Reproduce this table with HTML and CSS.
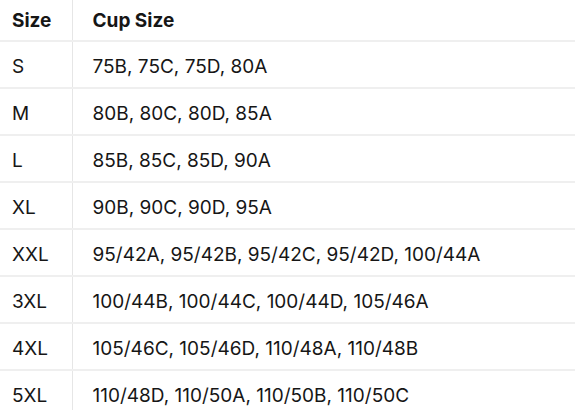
FILE: index.html
```html
<!DOCTYPE html>
<html>
<head>
<meta charset="utf-8">
<link rel="stylesheet" href="styles.css">
</head>
<body>
<table class="size-table">
  <thead>
    <tr><th class="col-size">Size</th><th class="col-cup">Cup Size</th></tr>
  </thead>
  <tbody>
    <tr><td class="col-size">S</td><td class="col-cup">75B, 75C, 75D, 80A</td></tr>
    <tr><td class="col-size">M</td><td class="col-cup">80B, 80C, 80D, 85A</td></tr>
    <tr><td class="col-size">L</td><td class="col-cup">85B, 85C, 85D, 90A</td></tr>
    <tr><td class="col-size">XL</td><td class="col-cup">90B, 90C, 90D, 95A</td></tr>
    <tr><td class="col-size">XXL</td><td class="col-cup">95/42A, 95/42B, 95/42C, 95/42D, 100/44A</td></tr>
    <tr><td class="col-size">3XL</td><td class="col-cup">100/44B, 100/44C, 100/44D, 105/46A</td></tr>
    <tr><td class="col-size">4XL</td><td class="col-cup">105/46C, 105/46D, 110/48A, 110/48B</td></tr>
    <tr><td class="col-size">5XL</td><td class="col-cup">110/48D, 110/50A, 110/50B, 110/50C</td></tr>
  </tbody>
</table>
</body>
</html>
```
FILE: styles.css
```css
html, body {
  margin: 0;
  padding: 0;
  background: #ffffff;
}
body {
  font-family: Inter, "Liberation Sans", sans-serif;
  color: #161616;
  overflow: hidden;
}
.size-table {
  width: 575px;
  border-collapse: collapse;
  font-size: 19px;
}
.size-table th,
.size-table td {
  text-align: left;
  padding: 0;
  border-bottom: 2px solid #efefef;
  vertical-align: middle;
  box-sizing: border-box;
}
.size-table th {
  height: 41px;
  font-weight: 700;
}
.size-table td {
  height: 47px;
  padding-top: 4px;
  font-weight: 400;
}
.col-size {
  width: 72px;
  padding-left: 12px !important;
  border-right: 1px solid #e6e6e6;
}
.col-cup {
  padding-left: 20px !important;
}
```
